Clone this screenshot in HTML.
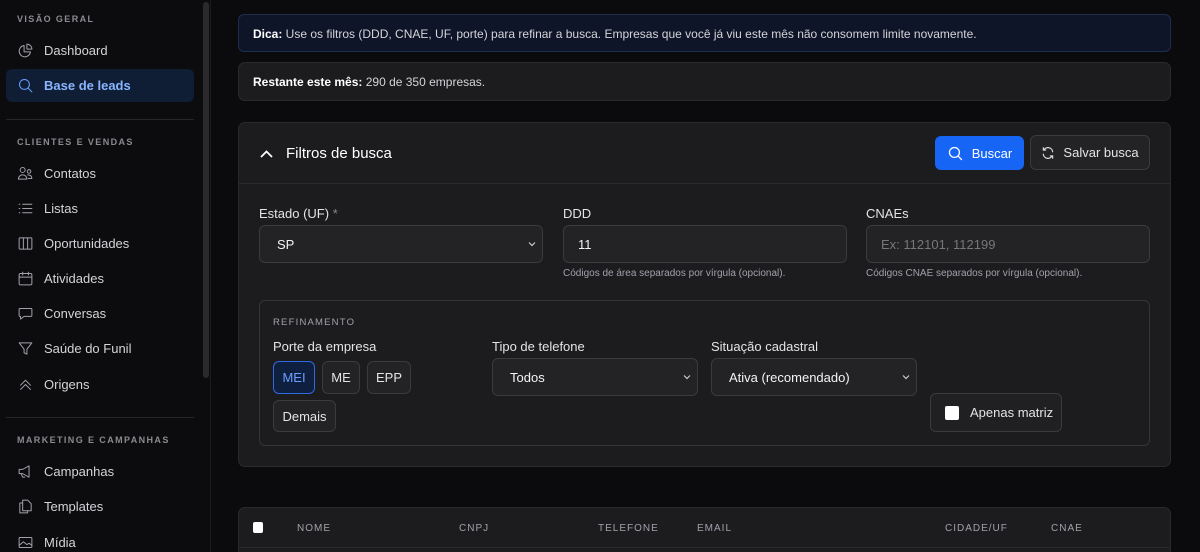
<!DOCTYPE html>
<html><head><meta charset="utf-8"><style>
*{box-sizing:border-box;margin:0;padding:0}
html,body{width:1200px;height:552px;overflow:hidden}
body{background:#0b0b0d;font-family:"Liberation Sans",sans-serif;color:#e4e4e7;position:relative}
.a{position:absolute}
.side{left:0;top:0;width:211px;height:552px;background:#0c0c0e;border-right:1px solid #1c1c1f}
.sb{left:203px;top:2px;width:6px;height:376px;background:#2a2a2d;border-radius:3px}
.sec{font-size:9px;letter-spacing:1.4px;color:#8a8a90;font-weight:bold;left:17px}
.it{left:17px;font-size:13px;color:#d4d4d8;display:flex;align-items:center;gap:10px;height:20px}
.it svg{width:17px;height:17px;fill:none;stroke:#a1a1aa;stroke-width:1.4;stroke-linecap:round;stroke-linejoin:round}
.hr{left:6px;width:188px;height:1px;background:#27272a}
.card{background:#1c1c1f;border:1px solid #2a2a2e;border-radius:7px}
.lbl{font-size:13px;color:#e4e4e7}
.inp{background:#232326;border:1px solid #3a3a3f;border-radius:6px;font-size:13px;color:#f4f4f5;padding-left:17px;display:flex;align-items:center}
.help{font-size:10px;color:#a1a1aa}
.chev{position:absolute;right:6px;top:50%;margin-top:-4px;width:8px;height:8px}
.btn{background:#232326;border:1px solid #3a3a3f;border-radius:6px;font-size:13px;color:#e4e4e7;display:flex;align-items:center;justify-content:center}
.th{font-size:10px;letter-spacing:1px;color:#a1a1aa;top:523px}
</style></head><body>
<div class="a side"></div><div class="a sb"></div>
<div class="a sec" style="top:14px">VISÃO GERAL</div>
<div class="a it" style="top:40px"><svg viewBox="0 0 24 24"><path d="M10 5a8 8 0 1 0 9 9h-9z"/><path d="M14 3a7 7 0 0 1 7 7h-7z"/></svg>Dashboard</div>
<div class="a" style="left:6px;top:69px;width:188px;height:33px;background:#0f1e35;border-radius:6px"></div>
<div class="a it" style="top:75px;color:#8ab4ff;font-weight:bold"><svg viewBox="0 0 24 24" style="stroke:#6aa0ff"><circle cx="10.5" cy="10.5" r="7"/><path d="M16 16l5 5"/></svg>Base de leads</div>
<div class="a hr" style="top:119px"></div>
<div class="a sec" style="top:137px">CLIENTES E VENDAS</div>
<div class="a it" style="top:163px"><svg viewBox="0 0 24 24"><circle cx="8" cy="7" r="3.5"/><circle cx="17" cy="9" r="2.5"/><path d="M2 20c0-4 3-6 6-6s6 2 6 6z"/><path d="M15 14c3 0 6 1 6 5h-5"/></svg>Contatos</div>
<div class="a it" style="top:198px"><svg viewBox="0 0 24 24"><path d="M8 6h13M8 12h13M8 18h13M3 6h1M3 12h1M3 18h1"/></svg>Listas</div>
<div class="a it" style="top:233px"><svg viewBox="0 0 24 24"><rect x="3" y="4" width="18" height="16" rx="1"/><path d="M9 4v16M15 4v16"/></svg>Oportunidades</div>
<div class="a it" style="top:268px"><svg viewBox="0 0 24 24"><rect x="3" y="5" width="18" height="16" rx="2"/><path d="M3 10h18M8 3v4M16 3v4"/></svg>Atividades</div>
<div class="a it" style="top:303px"><svg viewBox="0 0 24 24"><path d="M4 5h16a1 1 0 0 1 1 1v9a1 1 0 0 1-1 1H10l-5 4v-4H4a1 1 0 0 1-1-1V6a1 1 0 0 1 1-1z"/></svg>Conversas</div>
<div class="a it" style="top:338px"><svg viewBox="0 0 24 24"><path d="M3 4h18l-7 9v7l-4-2v-5z"/></svg>Saúde do Funil</div>
<div class="a it" style="top:374px"><svg viewBox="0 0 24 24"><path d="M5 13l7-7 7 7M5 19l7-7 7 7"/></svg>Origens</div>
<div class="a hr" style="top:417px"></div>
<div class="a sec" style="top:435px">MARKETING E CAMPANHAS</div>
<div class="a it" style="top:461px"><svg viewBox="0 0 24 24"><path d="M3 9h5l9-5v16l-9-5H3z"/><path d="M6 15l2 5h3"/></svg>Campanhas</div>
<div class="a it" style="top:496px"><svg viewBox="0 0 24 24"><path d="M8 3h7l5 5v10H8z"/><path d="M8 7H4v14h11v-3"/></svg>Templates</div>
<div class="a it" style="top:532px"><svg viewBox="0 0 24 24"><rect x="3" y="5" width="18" height="14" rx="1"/><path d="M3 16l6-5 5 4 3-2 4 3"/></svg>Mídia</div>

<div class="a" style="left:238px;top:14px;width:933px;height:38px;background:#0e1528;border:1px solid #1f2d4d;border-radius:6px;font-size:12px;color:#d4d4d8;padding:12px 14px"><b style="color:#fff">Dica:</b> Use os filtros (DDD, CNAE, UF, porte) para refinar a busca. Empresas que você já viu este mês não consomem limite novamente.</div>
<div class="a card" style="left:238px;top:62px;width:933px;height:39px;font-size:12px;color:#d4d4d8;padding:12px 14px"><b style="color:#fff">Restante este mês:</b> 290 de 350 empresas.</div>

<div class="a card" style="left:238px;top:122px;width:933px;height:345px"></div>
<div class="a" style="left:239px;top:183px;width:931px;height:1px;background:#2a2a2e"></div>
<svg class="a" style="left:260px;top:148px" width="13" height="12" viewBox="0 0 13 12"><path d="M1 9l5.5-5.5L12 9" fill="none" stroke="#fff" stroke-width="1.8"/></svg>
<div class="a" style="left:286px;top:145px;font-size:15px;color:#fff">Filtros de busca</div>
<div class="a" style="left:935px;top:136px;width:89px;height:34px;background:#1765f5;border-radius:6px;font-size:13px;color:#fff;display:flex;align-items:center;justify-content:center;gap:8px"><svg width="17" height="17" viewBox="0 0 24 24" fill="none" stroke="#fff" stroke-width="1.8"><circle cx="10.5" cy="10.5" r="7"/><path d="M16 16l5 5"/></svg>Buscar</div>
<div class="a btn" style="left:1030px;top:135px;width:120px;height:35px;gap:8px"><svg width="14" height="14" viewBox="0 0 24 24" fill="none" stroke="#ddd" stroke-width="2" stroke-linecap="round"><path d="M20 10a8 8 0 0 0-15-3M4 3v4h4M4 14a8 8 0 0 0 15 3M20 21v-4h-4"/></svg>Salvar busca</div>

<div class="a lbl" style="left:259px;top:206px">Estado (UF) <span style="color:#888">*</span></div>
<div class="a inp" style="left:259px;top:225px;width:284px;height:38px">SP<svg class="chev" viewBox="0 0 8 8"><path d="M1 2.5l3 3 3-3" fill="none" stroke="#ccc" stroke-width="1.2"/></svg></div>
<div class="a lbl" style="left:563px;top:206px">DDD</div>
<div class="a inp" style="left:563px;top:225px;width:284px;height:38px;padding-left:14px">11</div>
<div class="a help" style="left:563px;top:268px">Códigos de área separados por vírgula (opcional).</div>
<div class="a lbl" style="left:866px;top:206px">CNAEs</div>
<div class="a inp" style="left:866px;top:225px;width:284px;height:38px;padding-left:14px;color:#777">Ex: 112101, 112199</div>
<div class="a help" style="left:866px;top:268px">Códigos CNAE separados por vírgula (opcional).</div>

<div class="a" style="left:259px;top:300px;width:891px;height:146px;border:1px solid #34343a;border-radius:6px"></div>
<div class="a" style="left:273px;top:317px;font-size:9.5px;letter-spacing:1.2px;color:#a1a1aa">REFINAMENTO</div>
<div class="a lbl" style="left:273px;top:339px">Porte da empresa</div>
<div class="a btn" style="left:273px;top:361px;width:42px;height:33px;background:#0f1f3f;border-color:#2f6ae0;color:#6aa0ff">MEI</div>
<div class="a btn" style="left:322px;top:361px;width:38px;height:33px">ME</div>
<div class="a btn" style="left:367px;top:361px;width:44px;height:33px">EPP</div>
<div class="a btn" style="left:273px;top:400px;width:63px;height:32px">Demais</div>
<div class="a lbl" style="left:492px;top:339px">Tipo de telefone</div>
<div class="a inp" style="left:492px;top:358px;width:206px;height:38px">Todos<svg class="chev" viewBox="0 0 8 8"><path d="M1 2.5l3 3 3-3" fill="none" stroke="#ccc" stroke-width="1.2"/></svg></div>
<div class="a lbl" style="left:711px;top:339px">Situação cadastral</div>
<div class="a inp" style="left:711px;top:358px;width:206px;height:38px">Ativa (recomendado)<svg class="chev" viewBox="0 0 8 8"><path d="M1 2.5l3 3 3-3" fill="none" stroke="#ccc" stroke-width="1.2"/></svg></div>
<div class="a btn" style="left:930px;top:393px;width:132px;height:39px;justify-content:flex-start;padding-left:14px;gap:11px;background:#202023"><span style="width:14px;height:14px;background:#fff;border-radius:2px;display:inline-block"></span>Apenas matriz</div>

<div class="a card" style="left:238px;top:507px;width:933px;height:50px"></div>
<div class="a" style="left:239px;top:547px;width:931px;height:1px;background:#2a2a2e"></div>
<div class="a" style="left:253px;top:522px;width:10px;height:11px;background:#fff;border-radius:2px"></div>
<div class="a th" style="left:297px">NOME</div>
<div class="a th" style="left:459px">CNPJ</div>
<div class="a th" style="left:598px">TELEFONE</div>
<div class="a th" style="left:697px">EMAIL</div>
<div class="a th" style="left:945px">CIDADE/UF</div>
<div class="a th" style="left:1051px">CNAE</div>
</body></html>
